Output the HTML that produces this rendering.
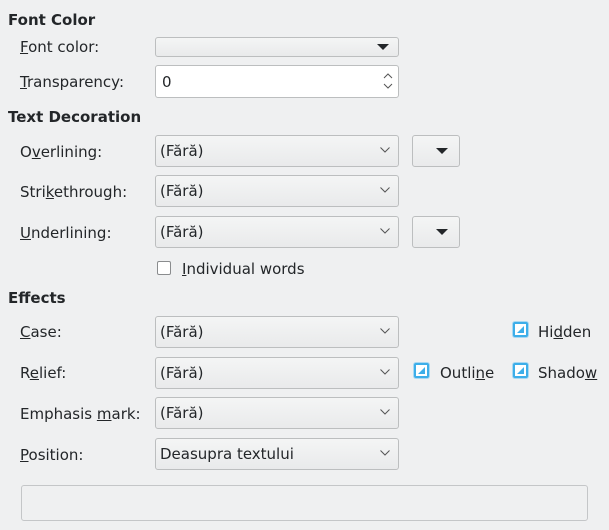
<!DOCTYPE html>
<html><head><meta charset="utf-8"><style>
body{margin:0;width:609px;height:530px;background:#eff0f1;font-family:"DejaVu Sans","Liberation Sans",sans-serif;font-size:15px;color:#232629;position:relative;overflow:hidden}
.a{position:absolute;white-space:nowrap;margin-top:1px}
.h{font-weight:bold;left:8px}
.l{left:20px}
.c{position:absolute;left:155px;width:242px;height:30px;border:1px solid #bcbebf;border-radius:3px;background:linear-gradient(#f4f5f5,#e9eaeb);box-sizing:content-box}
.c span{position:absolute;left:4px;top:6px}
.c svg{position:absolute;right:8px;top:11px}
.b{position:absolute;left:412px;width:46px;height:30px;border:1px solid #bcbebf;border-radius:3px;background:linear-gradient(#f4f5f5,#e9eaeb)}
.tri{position:absolute;width:0;height:0;border-left:6px solid transparent;border-right:6px solid transparent;border-top:6px solid #232629}
.cb{position:absolute;width:12px;height:12px;border:1px solid #8a8c8e;border-radius:2px;background:#fff}
.ck{position:absolute;width:11px;height:11px;border:2px solid #3daee9;border-radius:2px;background:#fff;box-shadow:0 0 0 1px #a8d8f2}
.ck i{position:absolute;left:2px;top:2px;width:7px;height:7px;background:linear-gradient(to bottom right,#fff 0 48%,#3daee9 52%)}
u{text-decoration:underline}
</style></head><body>
<div class="a h" style="top:10px">Font Color</div>
<div class="a l" style="top:37px"><u>F</u>ont color:</div>
<div class="c" style="top:37px;height:18px"><div class="tri" style="right:9px;top:6px"></div></div>
<div class="a l" style="top:72px"><u>T</u>ransparency:</div>
<div style="position:absolute;left:155px;top:65px;width:242px;height:31px;border:1px solid #bcbebf;border-radius:3px;background:#fff"><span class="a" style="left:6px;top:6px">0</span>
<svg style="position:absolute;right:5px;top:5px" width="10" height="20"><path d="M1 7L5 3L9 7M1 13L5 17L9 13" fill="none" stroke="#555" stroke-width="1"/></svg></div>
<div class="a h" style="top:107px">Text Decoration</div>

<div class="a l" style="top:142px">O<u>v</u>erlining:</div>
<div class="c" style="top:135px"><span>(Fără)</span><svg width="10" height="6"><path d="M0.5 0.5L5 5L9.5 0.5" fill="none" stroke="#555"/></svg></div>
<div class="b" style="top:135px"><div class="tri" style="left:23px;top:12px"></div></div>

<div class="a l" style="top:182px">Stri<u>k</u>ethrough:</div>
<div class="c" style="top:175px"><span>(Fără)</span><svg width="10" height="6"><path d="M0.5 0.5L5 5L9.5 0.5" fill="none" stroke="#555"/></svg></div>

<div class="a l" style="top:223px"><u>U</u>nderlining:</div>
<div class="c" style="top:216px"><span>(Fără)</span><svg width="10" height="6"><path d="M0.5 0.5L5 5L9.5 0.5" fill="none" stroke="#555"/></svg></div>
<div class="b" style="top:216px"><div class="tri" style="left:23px;top:12px"></div></div>

<div class="cb" style="left:157px;top:261px"></div>
<div class="a" style="left:182px;top:259px"><u>I</u>ndividual words</div>

<div class="a h" style="top:288px">Effects</div>
<div class="a l" style="top:322px"><u>C</u>ase:</div>
<div class="c" style="top:316px"><span>(Fără)</span><svg width="10" height="6"><path d="M0.5 0.5L5 5L9.5 0.5" fill="none" stroke="#555"/></svg></div>
<div class="ck" style="left:513px;top:322px"><i></i></div>
<div class="a" style="left:538px;top:322px">Hi<u>d</u>den</div>

<div class="a l" style="top:363px">R<u>e</u>lief:</div>
<div class="c" style="top:357px"><span>(Fără)</span><svg width="10" height="6"><path d="M0.5 0.5L5 5L9.5 0.5" fill="none" stroke="#555"/></svg></div>
<div class="ck" style="left:414px;top:363px"><i></i></div>
<div class="a" style="left:440px;top:363px">Outli<u>n</u>e</div>
<div class="ck" style="left:513px;top:363px"><i></i></div>
<div class="a" style="left:538px;top:363px">Shado<u>w</u></div>

<div class="a l" style="top:404px">Emphasis <u>m</u>ark:</div>
<div class="c" style="top:397px"><span>(Fără)</span><svg width="10" height="6"><path d="M0.5 0.5L5 5L9.5 0.5" fill="none" stroke="#555"/></svg></div>

<div class="a l" style="top:445px"><u>P</u>osition:</div>
<div class="c" style="top:438px"><span>Deasupra textului</span><svg width="10" height="6"><path d="M0.5 0.5L5 5L9.5 0.5" fill="none" stroke="#555"/></svg></div>

<div style="position:absolute;left:21px;top:485px;width:565px;height:34px;border:1px solid #c4c6c8;border-radius:3px;background:#eff0f1"></div>
</body></html>
